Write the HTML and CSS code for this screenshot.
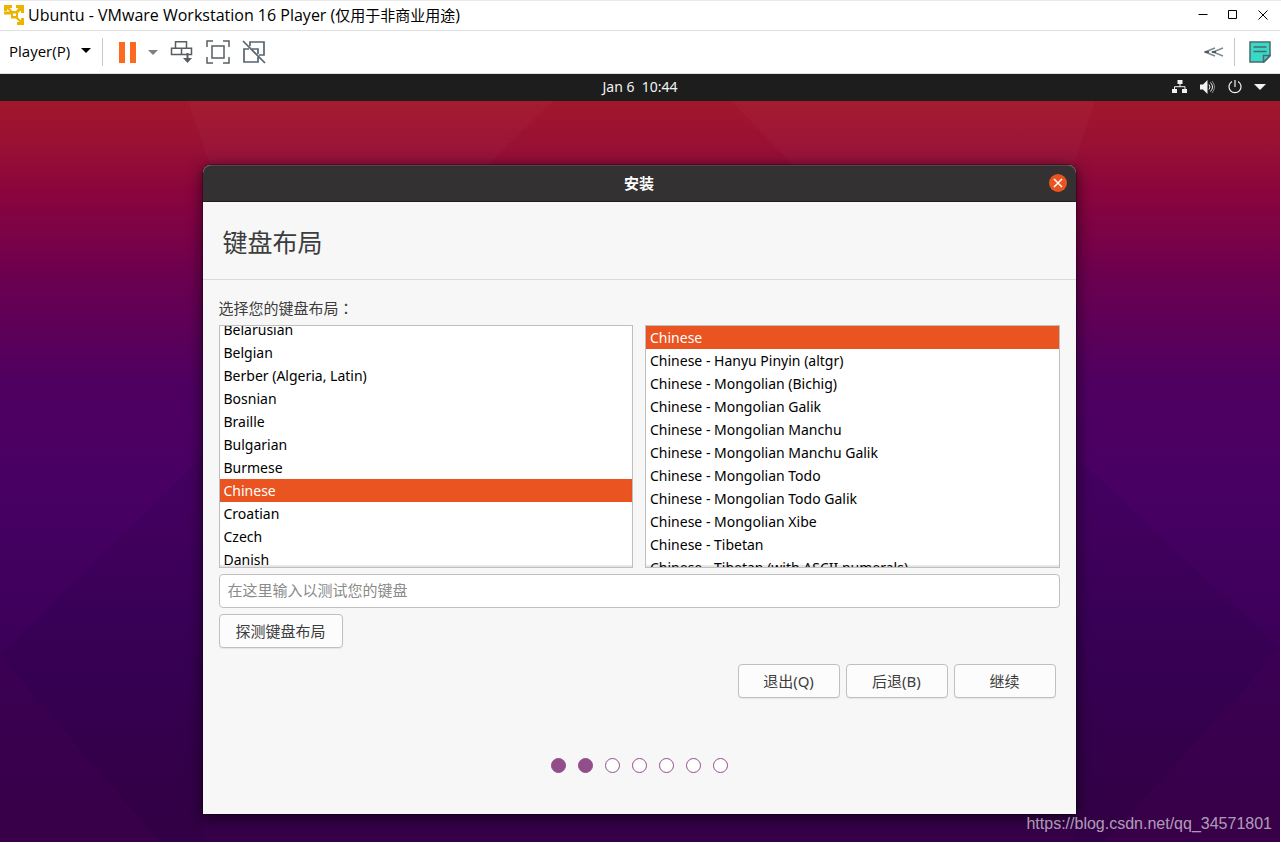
FILE: index.html
```html
<!DOCTYPE html>
<html lang="zh-CN">
<head>
<meta charset="utf-8">
<meta name="viewport" content="width=device-width, initial-scale=1">
<title>Ubuntu - VMware Workstation 16 Player</title>
<link rel="stylesheet" href="styles.css">
</head>
<body>
<header class="titlebar">
  <svg class="logo" width="22" height="22" viewBox="0 0 22 22" aria-hidden="true">
    <path d="M1 1h8v3H6.500l3 3H13l2.500-3H13V1h8v8h-3V6.500L15 9v4.500l3 3V14h3v7h-7v-3h2.500l-3.500-3.500H8v-4H1V7.500h6L4 5v2H1zM10 9.500V12h3V9.500z" fill="#ecb400" fill-rule="evenodd"/>
  </svg>
  <h1 class="titlebar-text">Ubuntu - VMware Workstation 16 Player (<span class="titlebar-note">仅用于非商业用途</span>)</h1>
  <div class="window-controls">
    <button type="button" class="window-button" aria-label="Minimize"><svg width="10" height="10" viewBox="0 0 10 10" stroke="#000"><path d="M.5 4.500h9"/></svg></button>
    <button type="button" class="window-button" aria-label="Maximize"><svg width="10" height="10" viewBox="0 0 10 10" stroke="#000" fill="none"><path d="M.5.5h8v8h-8z"/></svg></button>
    <button type="button" class="window-button" aria-label="Close"><svg width="10" height="10" viewBox="0 0 10 10" stroke="#000"><path d="M.5.5l9 9M9.500.5l-9 9"/></svg></button>
  </div>
</header>

<nav class="toolbar" aria-label="Player">
  <button type="button" class="player-menu">Player(P)<svg width="10" height="5" viewBox="0 0 10 5"><path d="M0 0h10L5 5z"/></svg></button>
  <span class="divider"></span>
  <div class="tools">
    <button type="button" class="tool pause" aria-label="Pause">
      <svg width="17" height="21" viewBox="0 0 17 21" fill="#fb6a20"><path d="M0 0h6v21H0zM11 0h6v21h-6z"/></svg>
    </button>
    <button type="button" class="tool pause-options" aria-label="Power options">
      <svg width="10" height="5" viewBox="0 0 10 5" fill="#808080"><path d="M0 0h10L5 5z"/></svg>
    </button>
    <button type="button" class="tool" aria-label="Send Ctrl+Alt+Del">
      <svg width="24" height="24" viewBox="0 0 24 24" fill="none" stroke="#575d61" stroke-width="1.500"><path d="M5.500 1.700h11v6.500h-11zM1.500 8.200h10v6.300h-10zM11.500 8.200h10v6.300h-10z"/><path d="M17.500 13v8" stroke-width="2"/><path d="M13 18h9l-4.500 5z" fill="#575d61" stroke="none"/></svg>
    </button>
    <button type="button" class="tool" aria-label="Full screen">
      <svg width="24" height="24" viewBox="0 0 24 24" fill="none" stroke="#575d61" stroke-width="1.500"><path d="M1 7V1h6M17 1h6v6M23 17v6h-6M7 23H1v-6"/><path d="M6 6h12v12H6z"/></svg>
    </button>
    <button type="button" class="tool" aria-label="Unity mode">
      <svg width="24" height="24" viewBox="0 0 24 24" fill="none" stroke="#566470" stroke-width="1.700"><path d="M8 6V2h14v13h-5M7 9H2v13h14v-5M10 9h6v5"/><path d="M1 1l22 22"/></svg>
    </button>
  </div>
  <div class="tools tools-end">
    <button type="button" class="tool" aria-label="Collapse">
      <svg width="20" height="10" viewBox="0 0 20 10" fill="none" stroke="#808a91" stroke-width="1.500"><path d="M19 1L9 5l10 4M11 1L1 5l10 4"/><path d="M1 5h4M8 5h4" stroke="#4d5a64" stroke-width="2"/></svg>
    </button>
    <span class="divider"></span>
    <button type="button" class="tool" aria-label="Notes">
      <svg width="22" height="22" viewBox="0 0 22 22" stroke="#4d6872" stroke-width="1.500"><path d="M1 1h20v14l-6 6H1z" fill="#38dac4"/><path d="M21 14.500h-6.500V21z" fill="#38dac4"/><path d="M4.500 6h13M4.500 10.500h13"/></svg>
    </button>
  </div>
</nav>

<main class="guest">
  <svg class="wallpaper" viewBox="0 0 1280 741" preserveAspectRatio="none" aria-hidden="true">
    <defs>
      <linearGradient id="sky" x1="0" y1="0" x2="0" y2="1">
        <stop offset="0" stop-color="#a3172b"/><stop offset=".07" stop-color="#960f35"/><stop offset=".12" stop-color="#8b053d"/>
        <stop offset=".24" stop-color="#6b0050"/><stop offset=".38" stop-color="#4f0061"/><stop offset=".52" stop-color="#480063"/>
        <stop offset=".7" stop-color="#3d005b"/><stop offset=".85" stop-color="#37004f"/><stop offset="1" stop-color="#350047"/>
      </linearGradient>
    </defs>
    <path d="M0 0h1280v741H0z" fill="url(#sky)"/>
    <path d="M188 0h365L340 210H260zM731 0h364l-70 210h-90z" fill="#fff" fill-opacity=".025"/>
    <path d="M0 554l203-198v385h-43zM1280 548l-204-192v385h28z" fill="#100030" fill-opacity=".07"/>
    <path d="M0 554v187h160zM1280 548v193h-176z" fill="#40004c" fill-opacity=".25"/>
  </svg>

  <div class="panel">
    <time class="clock">Jan 6&nbsp; 10:44</time>
    <div class="indicators">
      <svg width="16" height="14" viewBox="0 0 16 14" fill="#f2f2f2"><path d="M5.500 0h5v4h-5zM0 9h5v4H0zM10 9h5v4h-5z"/><path d="M8 4v3M2.500 9V6.700h10.500V9" fill="none" stroke="#f2f2f2"/></svg>
      <svg width="16" height="14" viewBox="0 0 16 14" fill="#f2f2f2"><path d="M0 4.500h3L7.500 0v14L3 9.500H0z"/><path d="M9 4.500q2 2.500 0 5M10.500 2.500q4 4.500 0 9" fill="none" stroke="#f2f2f2"/><path d="M12 1q5 6 0 12" fill="none" stroke="#8a8a8a"/></svg>
      <svg width="14" height="14" viewBox="0 0 14 14" fill="none" stroke="#f2f2f2" stroke-width="1.200"><path d="M4 1.500a6 6 0 1 0 6 0M7 0v7"/></svg>
      <svg width="12" height="6" viewBox="0 0 12 6" fill="#f2f2f2"><path d="M0 0h12L6 6z"/></svg>
    </div>
  </div>

  <div class="desktop">
    <section class="dialog" aria-labelledby="dialog-title">
      <div class="dialog-bar">
        <h2 class="dialog-title" id="dialog-title">安装</h2>
        <button type="button" class="dialog-close" aria-label="关闭"><svg width="10" height="10" viewBox="0 0 10 10" stroke="#fff" stroke-width="1.500"><path d="M1 1l8 8M9 1L1 9"/></svg></button>
      </div>
      <h3 class="heading">键盘布局</h3>
      <form class="form">
        <p class="prompt" id="prompt">选择您的键盘布局<span class="colon" lang="zh-TW">：</span></p>
        <div class="lists">
          <div class="list">
            <ul class="rows rows-scrolled" role="listbox" aria-labelledby="prompt">
              <li class="row" role="option">Belarusian</li>
              <li class="row" role="option">Belgian</li>
              <li class="row" role="option">Berber (Algeria, Latin)</li>
              <li class="row" role="option">Bosnian</li>
              <li class="row" role="option">Braille</li>
              <li class="row" role="option">Bulgarian</li>
              <li class="row" role="option">Burmese</li>
              <li class="row selected" role="option" aria-selected="true">Chinese</li>
              <li class="row" role="option">Croatian</li>
              <li class="row" role="option">Czech</li>
              <li class="row" role="option">Danish</li>
            </ul>
          </div>
          <div class="list">
            <ul class="rows" role="listbox" aria-labelledby="prompt">
              <li class="row selected" role="option" aria-selected="true">Chinese</li>
              <li class="row" role="option">Chinese - Hanyu Pinyin (altgr)</li>
              <li class="row" role="option">Chinese - Mongolian (Bichig)</li>
              <li class="row" role="option">Chinese - Mongolian Galik</li>
              <li class="row" role="option">Chinese - Mongolian Manchu</li>
              <li class="row" role="option">Chinese - Mongolian Manchu Galik</li>
              <li class="row" role="option">Chinese - Mongolian Todo</li>
              <li class="row" role="option">Chinese - Mongolian Todo Galik</li>
              <li class="row" role="option">Chinese - Mongolian Xibe</li>
              <li class="row" role="option">Chinese - Tibetan</li>
              <li class="row" role="option">Chinese - Tibetan (with ASCII numerals)</li>
            </ul>
          </div>
        </div>
        <input class="test-input" type="text" aria-label="在这里输入以测试您的键盘" placeholder="在这里输入以测试您的键盘">
        <button type="button" class="button detect">探测键盘布局</button>
        <div class="actions">
          <button type="button" class="button">退出(Q)</button>
          <button type="button" class="button">后退(B)</button>
          <button type="button" class="button">继续</button>
        </div>
      </form>
      <div class="steps" aria-label="2 / 7">
        <span class="dot done"></span><span class="dot done"></span><span class="dot"></span><span class="dot"></span><span class="dot"></span><span class="dot"></span><span class="dot"></span>
      </div>
    </section>
    <span class="watermark">https://blog.csdn.net/qq_34571801</span>
  </div>
</main>
</body>
</html>
```
FILE: styles.css
```css
* { box-sizing: border-box; }

body {
  margin: 0;
  min-height: 100vh;
  display: flex;
  flex-direction: column;
  padding: 0 1px 1px 0;
  border-top: 1px solid #ebebeb;
  background: #fff;
  color: #000;
  font: 14px/20px "Noto Sans", "Noto Sans CJK SC", sans-serif;
}

h1, h2, h3, p, ul { margin: 0; padding: 0; font-weight: 400; }
ul { list-style: none; }
svg { display: block; flex: none; }
button { border: 0; padding: 0; background: none; color: inherit; font: inherit; }

.titlebar {
  display: flex;
  align-items: center;
  height: 30px;
  padding: 0 12px 2px 3px;
  border-bottom: 1px solid #dfdfdf;
}
.titlebar-text {
  flex: 1;
  margin-left: 3px;
  font: 16px/20px "Open Sans", "Noto Sans CJK SC", sans-serif;
  white-space: nowrap;
}
.titlebar-note { font-size: 15px; }
.window-controls { display: flex; gap: 20px; }
.window-button { width: 10px; height: 10px; }

.toolbar {
  display: flex;
  align-items: center;
  height: 43px;
  padding: 0 9px 0 9px;
  border-bottom: 1px solid #dfdfdf;
}
.player-menu {
  display: flex;
  align-items: center;
  gap: 11px;
  margin-right: 11px;
  padding-bottom: 3px;
  font: 15px/20px "Open Sans", sans-serif;
}
.divider { width: 1px; height: 28px; background: #c8c8c8; }
.tools { display: flex; align-items: center; gap: 12px; margin-left: 16px; }
.tools-end { gap: 14px; margin-left: auto; }
.tools-end .divider { margin-left: -4px; }

.guest {
  position: relative;
  flex: 1;
  display: flex;
  flex-direction: column;
  isolation: isolate;
  background: #37004f;
}
.wallpaper {
  position: absolute;
  inset: 27px 0 0;
  z-index: -1;
  width: 100%;
  height: calc(100% - 27px);
}

.panel {
  display: grid;
  grid-template-columns: 1fr auto 1fr;
  align-items: center;
  height: 27px;
  padding: 0 14px 2px;
  background: #1d1d1d;
  color: #f2f2f2;
}
.clock { grid-column: 2; }
.indicators { display: flex; align-items: center; justify-content: flex-end; gap: 12px; }

.desktop {
  flex: 1;
  padding: 64px 17px 28px 15px;
}
.dialog {
  max-width: 873px;
  margin: 0 auto;
  border-radius: 8px 8px 0 0;
  background: #f7f7f7;
  color: #3d3d3d;
  box-shadow: 0 0 0 1px rgba(0, 0, 0, .25), 0 3px 14px 2px rgba(0, 0, 0, .5);
}
.dialog-bar {
  display: grid;
  grid-template-columns: 1fr auto 1fr;
  align-items: center;
  height: 37px;
  padding: 0 9px 1px;
  border-top: 1px solid #4a4848;
  border-bottom: 1px solid #1e1d1d;
  border-radius: 8px 8px 0 0;
  background: #333131;
  color: #fff;
}
.dialog-title { grid-column: 2; font-size: 15px; font-weight: 700; }
.dialog-close {
  display: grid;
  place-items: center;
  justify-self: end;
  width: 18px;
  height: 18px;
  border-radius: 50%;
  background: #e95420;
}
.heading {
  padding: 24px 20px 20px;
  border-bottom: 1px solid #dadada;
  font-size: 25px;
  line-height: 33px;
}

.form { display: flex; flex-direction: column; padding: 18px 16px 0; }
.prompt { margin-bottom: 7px; font-size: 15px; }
.colon { font-family: "Noto Sans CJK TC", sans-serif; }
.lists { display: grid; grid-template-columns: 1fr 1fr; gap: 12px; }
.list {
  position: relative;
  height: 243px;
  overflow: hidden;
  border: 1px solid #bfbfbf;
  background: #fff;
  color: #000;
}
.list::after {
  content: "";
  position: absolute;
  inset: 0;
  box-shadow: inset 0 -2px 1px rgba(0, 0, 0, .1);
  pointer-events: none;
}
.rows-scrolled { margin-top: -8px; }
.row { height: 23px; padding: 0 4px; line-height: 23px; white-space: nowrap; }
.selected { background: #e95420; color: #fff; }

.test-input {
  height: 34px;
  margin: 6px 0;
  padding: 0 8px 2px;
  border: 1px solid #c0c0c0;
  border-radius: 4px;
  background: #fff;
  color: #000;
  font: 15px/20px "Noto Sans", "Noto Sans CJK SC", sans-serif;
}
.test-input::placeholder { color: #8b8b8b; opacity: 1; }

.button {
  min-width: 102px;
  height: 34px;
  padding: 0 16px;
  border: 1px solid #c0c0c0;
  border-radius: 4px;
  background: #fcfcfc;
  box-shadow: 0 1px 1px rgba(0, 0, 0, .07);
  font-size: 15px;
}
.detect { align-self: flex-start; }
.actions { display: flex; justify-content: flex-end; gap: 6px; padding: 16px 4px 0 0; }

.steps { display: flex; justify-content: center; gap: 12px; padding: 60px 0 41px; }
.dot { width: 15px; height: 15px; border: 1px solid #924d8b; border-radius: 50%; background: #fff; }
.done { background: #924d8b; }

.watermark {
  position: absolute;
  right: 8px;
  bottom: 8px;
  color: rgba(255, 255, 255, .62);
  font: 16px/20px "Liberation Sans", sans-serif;
}
```
